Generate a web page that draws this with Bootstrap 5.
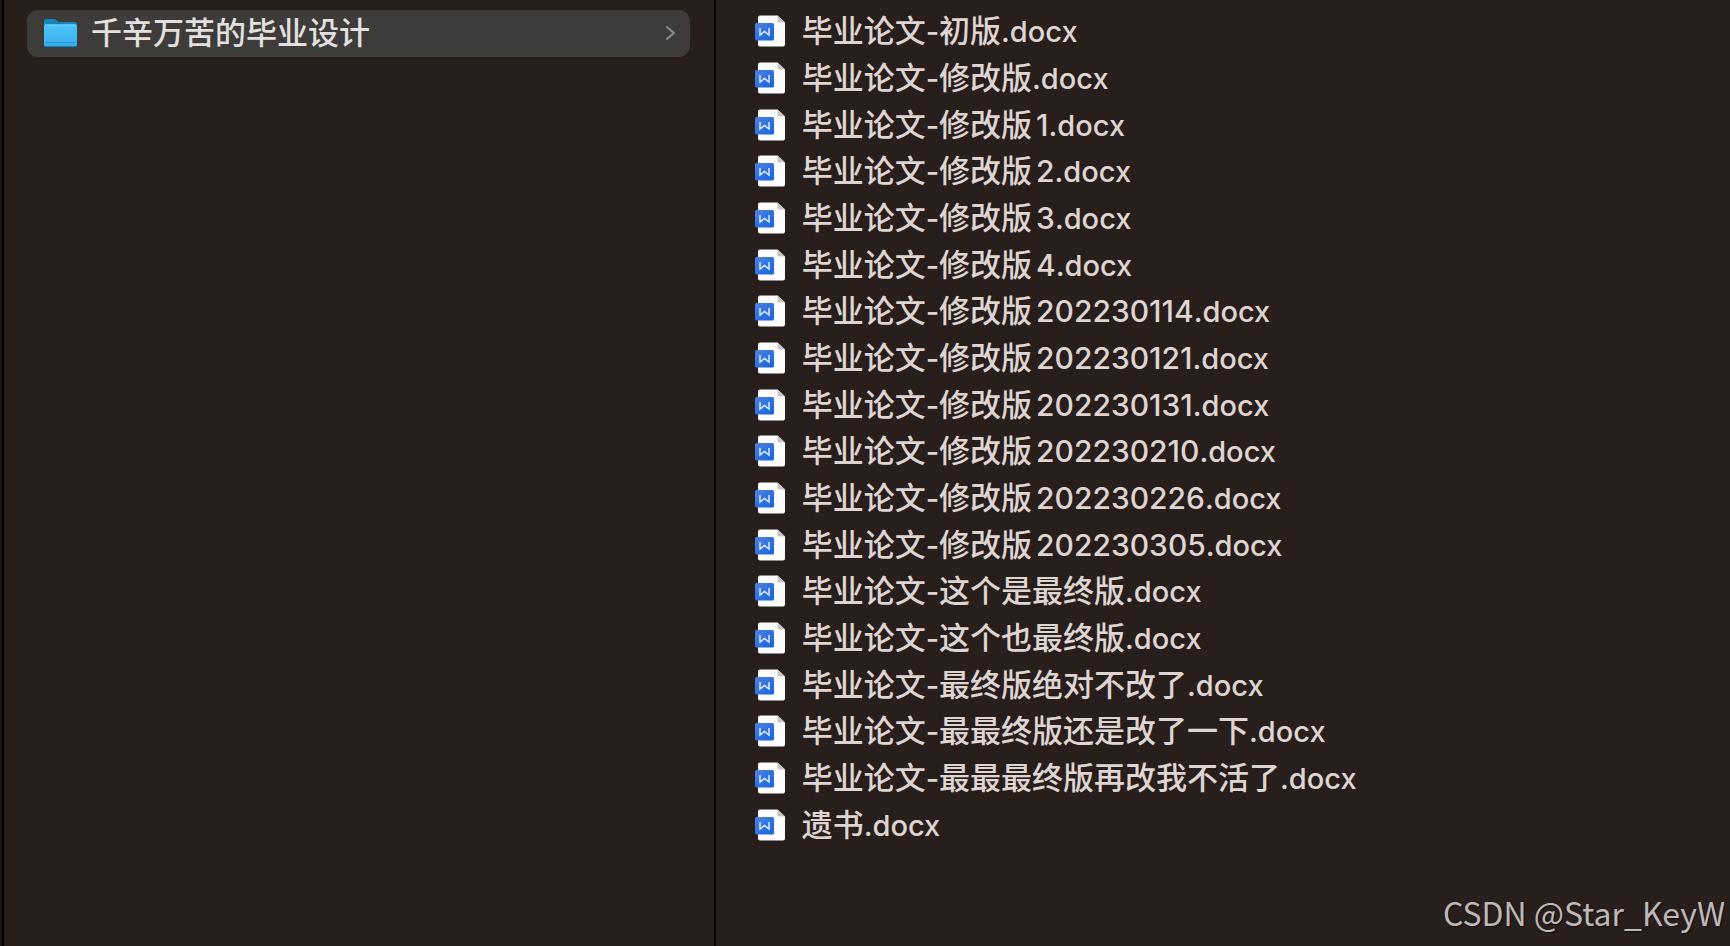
<!DOCTYPE html>
<html lang="zh-CN">
<head>
<meta charset="utf-8">
<meta name="viewport" content="width=device-width, initial-scale=1">
<title>千辛万苦的毕业设计</title>
<link href="https://cdn.jsdelivr.net/npm/bootstrap@5.3.0/dist/css/bootstrap.min.css" rel="stylesheet">
<style>
  body { background: #281e1c; color: #ded5d3; font-family: Inter, "Noto Sans CJK SC", sans-serif; font-size: 31px; font-weight: 500; line-height: 40px; }
  .finder { border-left: 2px solid #1c1715; }
  .pane-left { width: 41.3%; border-left: 2px solid #000; border-right: 2px solid #0b0505; padding: 10px 24px 0 23px; }
  .folder { height: 47px; padding: 0 14px 2px 16px; gap: 13px; border-radius: 11px; background: #3d3c3b; color: #e2e0df; font: inherit; }
  .folder:hover { background: #474645; color: #e2e0df; }
  .pane-right { padding: 8px 24px 0 39px; }
  /* eighteen equal rows */
  .files { height: 840px; display: grid; grid-template-rows: repeat(18, minmax(0, 1fr)); }
  .file { gap: 17px; white-space: nowrap; }
  .lat { font-size: 29px; line-height: 1; }
  .num { font-size: 30px; line-height: 1; margin-left: 4px; }
  .watermark { right: 5px; bottom: 11px; font: 32px/46px "Noto Sans CJK SC", sans-serif; color: #bcb9b8; text-shadow: 1px 1px 1px #0008; }
</style>
</head>
<body>
<svg width="0" height="0" class="position-absolute" aria-hidden="true">
  <defs>
    <linearGradient id="blue" x1="0" y1="0" x2="1" y2="1"><stop offset="0" stop-color="#4d83df"/><stop offset="1" stop-color="#1763df"/></linearGradient>
    <linearGradient id="sky" x1="0" y1="0" x2="0" y2="1"><stop offset="0" stop-color="#4fc4fa"/><stop offset="1" stop-color="#35aeec"/></linearGradient>
    <symbol id="doc" viewBox="0 0 30 32">
      <path d="M5 .5h17.500L30 7.500V29.500a2 2 0 0 1-2 2H5a2 2 0 0 1-2-2V2.500a2 2 0 0 1 2-2z" fill="#fcfcfc"/>
      <path d="M22.500.5 30 7.500h-6a1.500 1.500 0 0 1-1.500-1.500z" fill="#c9c5c4"/>
      <rect y="8" width="19" height="17.500" rx="1.500" fill="url(#blue)"/>
      <path d="M5 13v7l4.500-3.500 4.500 3.500v-7" fill="none" stroke="#e6f2ff" stroke-width="1.400"/>
    </symbol>
  </defs>
</svg>
<main class="finder d-flex min-vh-100 position-relative">
  <nav class="pane-left flex-shrink-0" aria-label="文件夹">
    <button type="button" class="folder btn border-0 w-100 d-flex align-items-center">
      <svg width="35" height="31" viewBox="0 0 35 31" aria-hidden="true">
        <path d="M1 4a2 2 0 0 1 2-2h8c1 0 1.700.4 2.500 1.200l2 1.800H32a2 2 0 0 1 2 2v8H1z" fill="#1785b9"/>
        <path d="M1 9.500a2 2 0 0 1 2-2h29a2 2 0 0 1 2 2V28a2 2 0 0 1-2 2H3a2 2 0 0 1-2-2z" fill="url(#sky)"/>
        <path d="M2 8h31" stroke="#79d7ff"/><path d="M1.500 25.500h32" stroke="#2999d2"/><path d="M2 29.500h31" stroke="#1b82b8"/>
      </svg>
      <span>千辛万苦的毕业设计</span>
      <svg class="ms-auto" width="11" height="16" viewBox="0 0 11 16" fill="none" stroke="#8d8c8b" stroke-width="2" stroke-linecap="round" stroke-linejoin="round" aria-hidden="true"><path d="m2 2 7 6-7 6"/></svg>
    </button>
  </nav>
  <section class="pane-right flex-grow-1" aria-label="文件">
    <ul class="files list-unstyled mb-0">
      <li class="file d-flex align-items-center"><svg width="30" height="32"><use href="#doc"/></svg><span>毕业论文<span class="lat">-</span>初版<span class="lat">.docx</span></span></li>
      <li class="file d-flex align-items-center"><svg width="30" height="32"><use href="#doc"/></svg><span>毕业论文<span class="lat">-</span>修改版<span class="lat">.docx</span></span></li>
      <li class="file d-flex align-items-center"><svg width="30" height="32"><use href="#doc"/></svg><span>毕业论文<span class="lat">-</span>修改版<span class="num">1</span><span class="lat">.docx</span></span></li>
      <li class="file d-flex align-items-center"><svg width="30" height="32"><use href="#doc"/></svg><span>毕业论文<span class="lat">-</span>修改版<span class="num">2</span><span class="lat">.docx</span></span></li>
      <li class="file d-flex align-items-center"><svg width="30" height="32"><use href="#doc"/></svg><span>毕业论文<span class="lat">-</span>修改版<span class="num">3</span><span class="lat">.docx</span></span></li>
      <li class="file d-flex align-items-center"><svg width="30" height="32"><use href="#doc"/></svg><span>毕业论文<span class="lat">-</span>修改版<span class="num">4</span><span class="lat">.docx</span></span></li>
      <li class="file d-flex align-items-center"><svg width="30" height="32"><use href="#doc"/></svg><span>毕业论文<span class="lat">-</span>修改版<span class="num">202230114</span><span class="lat">.docx</span></span></li>
      <li class="file d-flex align-items-center"><svg width="30" height="32"><use href="#doc"/></svg><span>毕业论文<span class="lat">-</span>修改版<span class="num">202230121</span><span class="lat">.docx</span></span></li>
      <li class="file d-flex align-items-center"><svg width="30" height="32"><use href="#doc"/></svg><span>毕业论文<span class="lat">-</span>修改版<span class="num">202230131</span><span class="lat">.docx</span></span></li>
      <li class="file d-flex align-items-center"><svg width="30" height="32"><use href="#doc"/></svg><span>毕业论文<span class="lat">-</span>修改版<span class="num">202230210</span><span class="lat">.docx</span></span></li>
      <li class="file d-flex align-items-center"><svg width="30" height="32"><use href="#doc"/></svg><span>毕业论文<span class="lat">-</span>修改版<span class="num">202230226</span><span class="lat">.docx</span></span></li>
      <li class="file d-flex align-items-center"><svg width="30" height="32"><use href="#doc"/></svg><span>毕业论文<span class="lat">-</span>修改版<span class="num">202230305</span><span class="lat">.docx</span></span></li>
      <li class="file d-flex align-items-center"><svg width="30" height="32"><use href="#doc"/></svg><span>毕业论文<span class="lat">-</span>这个是最终版<span class="lat">.docx</span></span></li>
      <li class="file d-flex align-items-center"><svg width="30" height="32"><use href="#doc"/></svg><span>毕业论文<span class="lat">-</span>这个也最终版<span class="lat">.docx</span></span></li>
      <li class="file d-flex align-items-center"><svg width="30" height="32"><use href="#doc"/></svg><span>毕业论文<span class="lat">-</span>最终版绝对不改了<span class="lat">.docx</span></span></li>
      <li class="file d-flex align-items-center"><svg width="30" height="32"><use href="#doc"/></svg><span>毕业论文<span class="lat">-</span>最最终版还是改了一下<span class="lat">.docx</span></span></li>
      <li class="file d-flex align-items-center"><svg width="30" height="32"><use href="#doc"/></svg><span>毕业论文<span class="lat">-</span>最最最终版再改我不活了<span class="lat">.docx</span></span></li>
      <li class="file d-flex align-items-center"><svg width="30" height="32"><use href="#doc"/></svg><span>遗书<span class="lat">.docx</span></span></li>
    </ul>
  </section>
  <div class="watermark position-absolute">CSDN @Star_KeyW</div>
</main>
<script src="https://cdn.jsdelivr.net/npm/bootstrap@5.3.0/dist/js/bootstrap.bundle.min.js"></script>
</body>
</html>
